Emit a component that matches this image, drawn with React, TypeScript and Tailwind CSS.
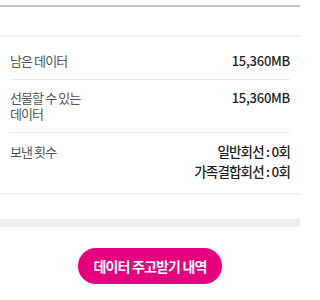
export default function App() {
  const font = { fontFamily: '"Noto Sans CJK KR", "Noto Sans", sans-serif' };

  return (
    <div className="w-[300px] h-[300px] bg-white overflow-hidden" style={font}>
      <div className="pt-[5px]">
        <div className="h-[2px] bg-[#c4c4c4]" />
      </div>
      <div className="h-[28px]" />
      <div className="h-[2px] bg-[#f2f2f2]" />

      <div className="px-[10px] pt-[6px]">
        {/* 남은 데이터 */}
        <div className="flex justify-between items-start py-[10px] border-b border-[#ececec]">
          <span className="text-[13px] leading-[16px] text-[#555] tracking-[-0.07em]">남은 데이터</span>
          <span className="text-[13px] leading-[16px] font-medium text-[#1f1f1f] tracking-[-0.02em]">15,360MB</span>
        </div>

        {/* 선물할 수 있는 데이터 */}
        <div className="flex justify-between items-start py-[10px] border-b border-[#ececec]">
          <span className="w-[80px] text-[13px] leading-[16px] text-[#555] tracking-[-0.07em]">
            선물할 수 있는 데이터
          </span>
          <span className="text-[13px] leading-[16px] font-medium text-[#1f1f1f] tracking-[-0.02em]">15,360MB</span>
        </div>

        {/* 보낸 횟수 */}
        <div className="flex justify-between items-start pt-[8px] pb-[12px]">
          <span className="mt-[3px] text-[13px] leading-[16px] text-[#555] tracking-[-0.07em]">보낸 횟수</span>
          <div className="flex flex-col items-end text-[13.5px] leading-[20px] font-medium text-[#1f1f1f] tracking-[-0.06em]">
            <span>일반회선 : 0회</span>
            <span>가족결합회선 : 0회</span>
          </div>
        </div>
      </div>

      <div className="h-[2px] bg-[#f2f2f2]" />
      <div className="h-[24px]" />
      <div className="h-[8px] bg-[#eeeeee]" />

      <div className="flex justify-center pt-[21px]">
        <button
          type="button"
          className="w-[144px] h-[36px] rounded-full bg-[#e5007d] text-white text-[14px] font-semibold tracking-[-0.06em]"
        >
          데이터 주고받기 내역
        </button>
      </div>
    </div>
  );
}
